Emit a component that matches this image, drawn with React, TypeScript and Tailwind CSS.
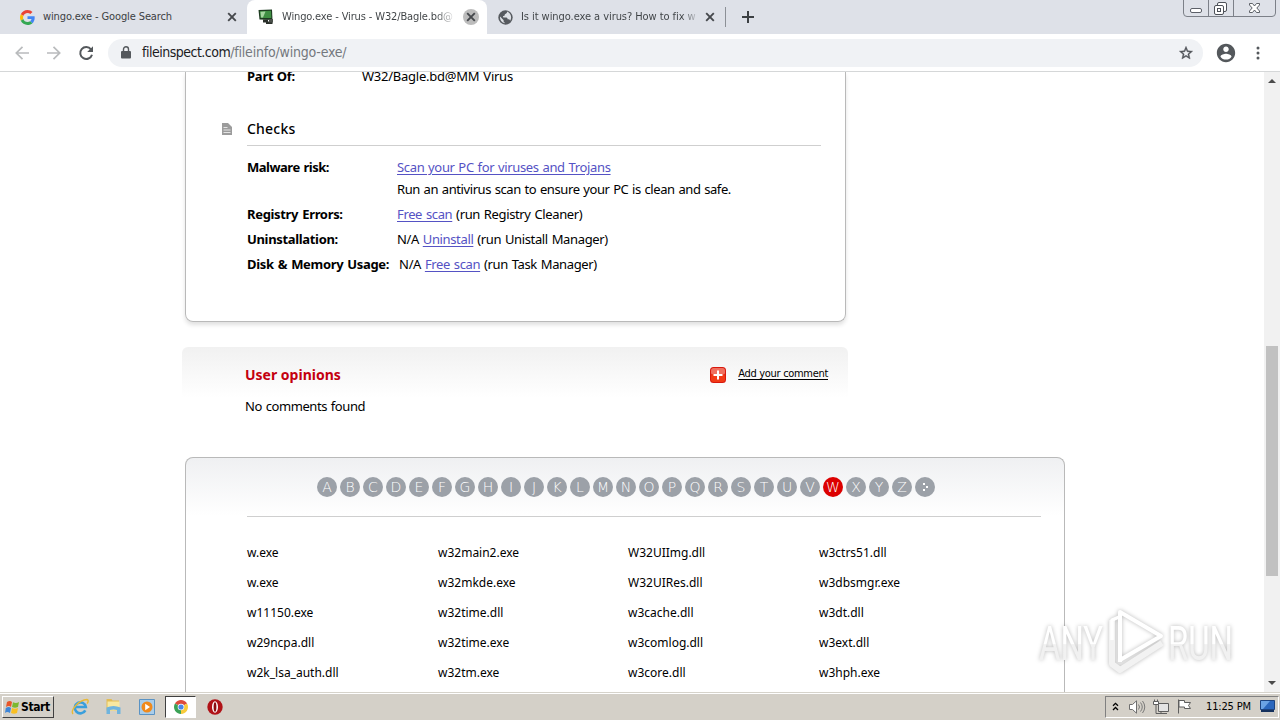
import type { ReactNode } from 'react';

const letters = [...'ABCDEFGHIJKLMNOPQRSTUVWXYZ'];

const files = [
  ['w.exe', 'w32main2.exe', 'W32UIImg.dll', 'w3ctrs51.dll'],
  ['w.exe', 'w32mkde.exe', 'W32UIRes.dll', 'w3dbsmgr.exe'],
  ['w11150.exe', 'w32time.dll', 'w3cache.dll', 'w3dt.dll'],
  ['w29ncpa.dll', 'w32time.exe', 'w3comlog.dll', 'w3ext.dll'],
  ['w2k_lsa_auth.dll', 'w32tm.exe', 'w3core.dll', 'w3hph.exe'],
];

function CloseIcon() {
  return (
    <svg width="10" height="10" viewBox="0 0 10 10" className="shrink-0">
      <path d="M1.2 1.2 8.8 8.8M8.8 1.2 1.2 8.8" stroke="#45484c" strokeWidth="1.9" />
    </svg>
  );
}

function GoogleIcon() {
  return (
    <svg width="15" height="15" viewBox="0 0 48 48" className="shrink-0">
      <path fill="#EA4335" d="M24 9.5c3.54 0 6.71 1.22 9.21 3.6l6.85-6.85C35.9 2.38 30.47 0 24 0 14.62 0 6.51 5.38 2.56 13.22l7.98 6.19C12.43 13.72 17.74 9.5 24 9.5z" />
      <path fill="#4285F4" d="M46.98 24.55c0-1.57-.15-3.09-.38-4.55H24v9.02h12.94c-.58 2.96-2.26 5.48-4.78 7.18l7.73 6c4.51-4.18 7.09-10.36 7.09-17.65z" />
      <path fill="#FBBC05" d="M10.53 28.59c-.48-1.45-.76-2.99-.76-4.59s.27-3.14.76-4.59l-7.98-6.19C.92 16.46 0 20.12 0 24c0 3.88.92 7.54 2.56 10.78l7.97-6.19z" />
      <path fill="#34A853" d="M24 48c6.48 0 11.93-2.13 15.89-5.81l-7.73-6c-2.15 1.45-4.92 2.3-8.16 2.3-6.26 0-11.57-4.22-13.47-9.91l-7.98 6.19C6.51 42.62 14.62 48 24 48z" />
    </svg>
  );
}

function MonitorIcon() {
  return (
    <svg width="16" height="16" viewBox="0 0 16 16" className="-ml-px shrink-0">
      <path d="M.5 1 14 .5 14.500 11 1.500 10.500z" fill="#1d3a20" />
      <path d="M1.800 2.200 13 1.800 13.400 9 2.500 9z" fill="#3f8f42" />
      <path d="M2.500 2.700 7.500 2.500 5 8.600 3 8.600z" fill="#a5d6a0" />
      <path d="M5 10.500h5v2h4.500V15H8v-1.500H5z" fill="#2b302b" />
      <path d="M11 10h4v3.500h-4z" fill="#4b504b" />
    </svg>
  );
}

function GlobeIcon() {
  return (
    <svg width="15" height="15" viewBox="0 0 24 24" className="-ml-px shrink-0">
      <circle cx="12" cy="12" r="11.500" fill="#565a5f" />
      <path d="M14.500 2.500c0 2-.5 3-2 3.300-1.500.2-1.700 1-1.700 2.500 0 1-1.600.8-2.400 1.300C7.600 10.100 8 12 9.500 12h3.800c1.600 0 2 1.200 2 2.700h1.500c1.500 0 2.200 1 2.500 2.300A9 9 0 0 0 21 12c0-4-2.600-8-6.500-9.500zM3.300 10.500 9 16.200v1.600c0 1.100.8 2 2 2V21.300A9.500 9.500 0 0 1 3.300 10.500z" fill="#dee1e6" />
    </svg>
  );
}

function TabStrip() {
  return (
    <div className="flex h-[34px] bg-[#dee1e8] text-[11px] text-[#3c4043] font-['DejaVu_Sans_Condensed',sans-serif]">
      <div className="flex w-[247px] items-center rounded-br-lg bg-[#dee1e8] pl-5">
        <GoogleIcon />
        <span className="ml-2 w-[184px] tracking-[-0.11px] whitespace-nowrap">wingo.exe - Google Search</span>
        <CloseIcon />
      </div>
      <div className="flex w-[240px] items-center rounded-t-lg bg-white pl-3">
        <MonitorIcon />
        <span className="ml-2 w-[175px] bg-linear-to-r from-[#3c4043] from-88% to-[#3c4043]/10 to-98% bg-clip-text tracking-[-0.13px] whitespace-nowrap text-transparent">
          Wingo.exe - Virus - W32/Bagle.bd@
        </span>
        <span className="ml-1.5 flex size-4 shrink-0 items-center justify-center rounded-full bg-[#bcbcbc]">
          <CloseIcon />
        </span>
      </div>
      <div className="flex w-[239px] items-center pl-3">
        <GlobeIcon />
        <span className="ml-2 w-[178px] bg-linear-to-r from-[#3c4043] from-91% to-[#3c4043]/10 bg-clip-text tracking-[-0.06px] whitespace-nowrap text-transparent">
          Is it wingo.exe a virus? How to fix w
        </span>
        <span className="ml-[7px] flex">
          <CloseIcon />
        </span>
        <div className="ml-2.5 h-5 w-px shrink-0 bg-[#8c9096]" />
      </div>
      <svg width="12" height="12" viewBox="0 0 12 12" className="mt-[11px] ml-4">
        <path d="M6 0v12M0 6h12" stroke="#3c4043" strokeWidth="2" />
      </svg>
      <WindowButtons />
    </div>
  );
}

function WindowButtons() {
  return (
    <svg width="93" height="17" viewBox="0 0 93 17" className="mr-1 ml-auto" fill="none" stroke="#7c8088">
      <path d="M.5 0V13Q.5 16.500 4 16.500H89Q92.500 16.500 92.500 13V0M25.500 0V16M50.500 0V16" />
      <rect x="7.500" y="8.500" width="11" height="4" rx="1.500" fill="#fff" stroke="#5c6068" />
      <g stroke="#4d5158" fill="#fff">
        <rect x="34.500" y="2.500" width="9" height="9" rx="1.500" />
        <rect x="31.500" y="5.500" width="9" height="9" rx="1.500" />
        <rect x="34.500" y="8.500" width="3" height="3" />
        <path d="M66.500 3.500h3l2 2.500 2-2.500h3v1.500L73.800 8l2.700 3v1.500h-3l-2-2.500-2 2.500h-3V11l2.700-3-2.700-3z" strokeWidth=".9" />
      </g>
    </svg>
  );
}

function Toolbar() {
  return (
    <div className="flex h-[38px] items-center border-b border-[#d5d7d8] bg-white pl-[15px]">
      <svg width="80" height="16" viewBox="0 0 80 16" fill="none" className="shrink-0">
        <path d="M14 8H1.500M7.500 1.800 1.300 8l6.200 6.200M32 8h12.500M38.500 1.800 44.700 8l-6.200 6.200" stroke="#b9bbbd" strokeWidth="1.700" />
        <path d="M76 4.300A6 6 0 1 0 77 9.700" stroke="#54585c" strokeWidth="2" />
        <path d="M78 1.200V7h-5.800z" fill="#54585c" />
      </svg>
      <div className="ml-[13px] flex h-7 w-[1095px] items-center rounded-full bg-[#f0f2f5] pr-[9px] pl-[13px] text-[14px] whitespace-nowrap font-['DejaVu_Sans_Condensed',sans-serif]">
        <svg width="10" height="13" viewBox="0 0 10 13" className="shrink-0">
          <path d="M2.500 6V3.300a2.500 2.500 0 0 1 5 0V6" fill="none" stroke="#54585c" strokeWidth="1.400" />
          <rect y="5" width="10" height="7.500" rx="1" fill="#54585c" />
        </svg>
        <span className="ml-[11px] tracking-[-0.5px] text-[#1b1c1e]">fileinspect.com</span>
        <span className="tracking-[-0.2px] text-[#74787d]">/fileinfo/wingo-exe/</span>
        <svg width="16" height="16" viewBox="0 0 24 24" className="ml-auto" fill="#4e5257">
          <path d="M22 9.240l-7.190-.62L12 2 9.190 8.630 2 9.240l5.460 4.730L5.820 21 12 17.270 18.180 21l-1.630-7.030L22 9.240zM12 15.400l-3.760 2.270 1-4.280-3.320-2.880 4.380-.38L12 6.100l1.710 4.040 4.380.38-3.320 2.880 1 4.280L12 15.400z" stroke="#4e5257" strokeWidth=".6" />
        </svg>
      </div>
      <svg width="22" height="22" viewBox="0 0 24 24" className="ml-3 shrink-0">
        <path fill="#54585c" d="M12 2C6.480 2 2 6.480 2 12s4.480 10 10 10 10-4.480 10-10S17.520 2 12 2zm0 3c1.660 0 3 1.340 3 3s-1.340 3-3 3-3-1.340-3-3 1.340-3 3-3zm0 14.200c-2.500 0-4.710-1.280-6-3.220.03-1.990 4-3.080 6-3.080 1.990 0 5.970 1.090 6 3.080-1.290 1.940-3.500 3.220-6 3.220z" />
      </svg>
      <svg width="4" height="14" viewBox="0 0 4 14" fill="#54585c" className="ml-[19px] shrink-0">
        <circle cx="2" cy="2" r="1.500" />
        <circle cx="2" cy="7" r="1.500" />
        <circle cx="2" cy="12" r="1.500" />
      </svg>
    </div>
  );
}

function A({ children }: { children: ReactNode }) {
  return <a href="#" className="text-[#5552c4] underline underline-offset-2">{children}</a>;
}

function CheckRow({ label, children }: { label: string; children: ReactNode }) {
  return (
    <div className="flex h-[25px] items-center whitespace-nowrap">
      <b className="min-w-[150px] pr-2.5 tracking-[-0.33px] [word-spacing:1px]">{label}</b>
      <span className="tracking-[-0.36px] [word-spacing:0.8px]">{children}</span>
    </div>
  );
}

function ChecksPanel() {
  return (
    <div className="h-[250px] w-[661px] rounded-b-lg border border-t-0 border-[#b9b9b9] pr-6 pl-[35px] shadow-[0_3px_4px_rgba(0,0,0,0.12)]">
      <div className="flex h-[9px] items-center pl-[26px] whitespace-nowrap">
        <b className="w-[115px] tracking-[-0.2px]">Part Of:</b>
        <span className="tracking-[-0.25px] [word-spacing:1px]">W32/Bagle.bd@MM Virus</span>
      </div>
      <div className="mt-[37px] flex">
        <svg width="11" height="12" viewBox="0 0 11 12" className="mt-[5px] mr-[15px] shrink-0">
          <path d="M1 0h6l4 4v8H1z" fill="#9c9c9c" />
          <path d="M2.500 4.500h4M2.500 7h7M2.500 9.500h7" stroke="#e4e4e4" />
        </svg>
        <h2 className="h-7 flex-1 border-b border-[#cfcfcf] text-[14px] leading-[22px] font-medium tracking-[0.2px]">Checks</h2>
      </div>
      <div className="mt-2.5 pl-[26px]">
        <div className="flex h-[46px] leading-[22px] whitespace-nowrap">
          <b className="w-[150px] tracking-[-0.5px] [word-spacing:1px]">Malware risk:</b>
          <div>
            <p className="tracking-[-0.34px] [word-spacing:0.7px]"><A>Scan your PC for viruses and Trojans</A></p>
            <p className="tracking-[-0.41px] [word-spacing:0.7px]">Run an antivirus scan to ensure your PC is clean and safe.</p>
          </div>
        </div>
        <div>
          <CheckRow label="Registry Errors:"><A>Free scan</A> (run Registry Cleaner)</CheckRow>
          <CheckRow label="Uninstallation:">N/A <A>Uninstall</A> (run Unistall Manager)</CheckRow>
          <CheckRow label="Disk & Memory Usage:">N/A <A>Free scan</A> (run Task Manager)</CheckRow>
        </div>
      </div>
    </div>
  );
}

function Opinions() {
  return (
    <div className="mt-[25px] -ml-[3px] h-[110px] w-[666px]">
      <div className="flex h-[51px] items-center rounded-t-md bg-linear-to-b from-[#f1f1f1] to-white pt-1 pr-5 pl-[63px]">
        <h2 className="text-[14px] leading-5 font-bold text-[#c4000f]">User opinions</h2>
        <svg width="16" height="16" viewBox="0 0 16 16" className="mt-px ml-auto">
          <rect width="16" height="16" rx="3.500" fill="#d8180c" />
          <rect x="1" y="1" width="14" height="7" rx="2.500" fill="#f0705f" />
          <rect x="1" y="7" width="14" height="8" rx="2.500" fill="#f23a16" />
          <path d="M8 3.500v9M3.500 8h9" stroke="#fff" strokeWidth="2" />
        </svg>
        <a href="#" className="ml-3 text-[11px] font-['DejaVu_Sans_Condensed',sans-serif] tracking-[-0.31px] text-black underline underline-offset-2">Add your comment</a>
      </div>
      <p className="pl-[63px] leading-4 tracking-[-0.42px] [word-spacing:0.8px]">No comments found</p>
    </div>
  );
}

function FileIndex() {
  return (
    <div className="w-[880px] grow rounded-t-lg border border-b-0 border-[#b9b9b9] bg-linear-to-b from-[#eff0f2] to-white to-[58px] pr-[23px] pl-[61px]">
      <div className="flex h-[59px] gap-[3px] border-b border-[#cfcfcf] pt-[19px] pl-[70px]">
        {letters.map(l => (
          <span
            key={l}
            className={`flex size-5 items-center justify-center rounded-full text-[14px] leading-5 font-extralight font-['DejaVu_Sans',sans-serif] text-white ${l === 'W' ? 'bg-[#dc0000]' : 'bg-[#9ca1a8]'}`}
          >
            {l}
          </span>
        ))}
        <span className="flex size-5 items-center justify-center rounded-full bg-[#9ca1a8]">
          <svg width="8" height="8" viewBox="0 0 8 8" fill="#fff">
            <path d="M2 0h2v2H2zM5 3h2v2H5zM2 6h2v2H2z" />
          </svg>
        </span>
      </div>
      <div className="mt-[21px] grid auto-rows-[30px] grid-cols-[191px_190px_191px_1fr] text-[12px] leading-[30px]">
        {files.flat().map((f, i) => <span key={i}>{f}</span>)}
      </div>
    </div>
  );
}

function Scrollbar() {
  return (
    <div className="flex w-4 shrink-0 flex-col items-center bg-[#f1f1f1] py-[7px]">
      <svg width="8" height="4" viewBox="0 0 8 4"><path d="M0 4 4 0l4 4z" fill="#4b4b4b" /></svg>
      <div className="mt-[263px] h-[230px] w-3 bg-[#c1c1c1]" />
      <svg width="8" height="4" viewBox="0 0 8 4" className="mt-auto"><path d="M0 0h8L4 4z" fill="#4b4b4b" /></svg>
    </div>
  );
}

function Watermark() {
  return (
    <svg
      width="210"
      height="80"
      viewBox="0 0 210 80"
      className="absolute top-[602px] left-[1030px] drop-shadow-[0_0_2px_rgba(0,0,0,0.28)]"
    >
      <defs>
        <linearGradient id="wm" x1="0" y1="0" x2="0" y2="1">
          <stop offset="0.500" stopColor="#fff" />
          <stop offset="0.520" stopColor="#f1f1f1" />
        </linearGradient>
      </defs>
      <g fill="url(#wm)" className="font-['Roboto',sans-serif] text-[49px]">
        <text x="9" y="58" textLength="64" lengthAdjust="spacingAndGlyphs">ANY</text>
        <text x="138" y="58" textLength="65" lengthAdjust="spacingAndGlyphs">RUN</text>
      </g>
      <g fill="none" strokeLinejoin="round">
        <path d="M82 18v44l8 6 42-27" stroke="#f2f2f2" strokeWidth="6" />
        <path d="M82 38V18l7-3" stroke="#fff" strokeWidth="3.500" />
        <path d="M90 60V10l41 24-41 24" stroke="#fff" strokeWidth="4" />
      </g>
    </svg>
  );
}

function Taskbar() {
  return (
    <div className="flex h-7 items-center border-t border-[#d6d3cb] bg-[#d4d0c8] pl-0.5 shadow-[inset_0_1px_0_#fff]">
      <div className="flex h-[22px] w-[52px] items-center border border-t-white border-r-[#404040] border-b-[#404040] border-l-white pl-0.5 text-[12px] font-bold text-black font-['DejaVu_Sans_Condensed',sans-serif] tracking-[-0.4px]">
        <svg width="15" height="14" viewBox="0 0 15 14" className="mr-px shrink-0">
          <path d="M2 2Q5 0 7 2L6 7Q4 5 1 7z" fill="#e8562a" />
          <path d="M8 2.300Q11 4 14 2L13 7Q10 8.500 7 7z" fill="#7cb82f" />
          <path d="M.8 8Q4 6 6 8L5 13Q2 11 0 13z" fill="#3e86d8" />
          <path d="M7 8Q10 9.500 13 8L12 13Q9 14.500 6 13z" fill="#f9bf21" />
        </svg>
        Start
      </div>
      <svg width="18" height="18" viewBox="0 0 18 18" className="ml-[17px]" fill="none">
        <path d="M14.300 12.300A5.500 5.500 0 1 1 14.800 9H4.500" stroke="#3a9fdc" strokeWidth="2.600" />
        <path d="M2 16C-1 12 8 2 16 1.500c2 .5 1 3 0 4" stroke="#e9b935" strokeWidth="1.400" />
      </svg>
      <svg width="17" height="17" viewBox="0 0 17 17" className="ml-4">
        <path d="M1.500 1h5l1 1.500h6.500v10h-12.500z" fill="#e3bd55" />
        <path d="M2.500 3.500h12v9h-12z" fill="#f8e8a0" />
        <path d="M1.500 9.500q7-3 14 0V16h-3.500v-4q-3.500-1-7 0v4H1.500z" fill="#6fb4de" />
      </svg>
      <svg width="16" height="16" viewBox="0 0 16 16" className="ml-[17px]">
        <path d="M.5.5h15v15H.5z" fill="#a9cdea" stroke="#5a93c4" />
        <circle cx="8" cy="8" r="5.500" fill="#f08a1c" />
        <path d="M6.200 4.800 11 8l-4.800 3.200z" fill="#fff" />
      </svg>
      <div className="ml-2.5 flex h-[22px] w-[31px] items-center justify-center border border-t-[#404040] border-r-white border-b-white border-l-[#404040] bg-white">
        <svg width="14" height="14" viewBox="0 0 14 14">
          <path d="M7 7 .94 3.500A7 7 0 0 1 13.060 3.500z" fill="#dd4b3c" />
          <path d="M7 7 13.060 3.500A7 7 0 0 1 7 14z" fill="#f8cb3b" />
          <path d="M7 7V14A7 7 0 0 1 .94 3.500z" fill="#3ba256" />
          <circle cx="7" cy="7" r="3.300" fill="#fff" />
          <circle cx="7" cy="7" r="2.600" fill="#4a86e8" />
        </svg>
      </div>
      <svg width="16" height="16" viewBox="0 0 16 16" className="ml-[11px]">
        <circle cx="8" cy="8" r="7.700" fill="#b01217" />
        <ellipse cx="8" cy="8" rx="3" ry="5.800" fill="#fff" />
        <ellipse cx="8" cy="8" rx="1.400" ry="4.800" fill="#8c0d10" />
      </svg>
      <div className="mr-px ml-auto flex h-[22px] w-[174px] items-center border border-t-[#808080] border-r-white border-b-white border-l-[#808080] pl-1.5">
        <svg width="7" height="9" viewBox="0 0 7 9" fill="none" stroke="#000" strokeWidth="1.300">
          <path d="m1 3.800 2.500-2.500L6 3.800M1 8l2.500-2.500L6 8" />
        </svg>
        <svg width="17" height="14" viewBox="0 0 17 14" className="ml-2.5" fill="none" stroke="#6e6e6e">
          <path d="M.5 4.500h3L7.500.8v12.400L3.500 9.500h-3z" fill="#fff" />
          <path d="M9.500 4.500q2 2.500 0 5M11.500 2.500q3.500 4.500 0 9M13.500 1q4.500 6 0 12" strokeWidth=".9" />
        </svg>
        <svg width="16" height="16" viewBox="0 0 16 16" className="ml-[7px]" fill="#fff" stroke="#5e5e5e">
          <path d="M5.500 4.500h10v8h-10zM8 12.500v2M6 14.500h8" fill="#e4e4e4" />
          <path d="M1.500.5v3M4.500.5v3M3 5.500v9h3" fill="none" />
          <path d="M.5 2.500h5v3h-5z" />
        </svg>
        <svg width="15" height="15" viewBox="0 0 15 15" className="ml-2" fill="#fff" stroke="#5e5e5e">
          <path d="M1.500.5v14" />
          <path d="M2 1.500h5.500v2h6l-2 3 2 3h-6v-1.500H2z" />
        </svg>
        <span className="ml-3.5 pt-px text-[11px] tracking-[-0.15px] whitespace-nowrap text-black font-['DejaVu_Sans_Condensed',sans-serif]">11:25 PM</span>
        <svg width="15" height="13" viewBox="0 0 15 13" className="ml-[9px]">
          <path d="M.5.5h14v9H.5z" fill="#2b67bd" stroke="#1d4480" />
          <path d="M1 1h9L3 9H1z" fill="#6ba3e4" />
          <path d="M1 10h13v2H1z" fill="#14305c" />
        </svg>
      </div>
    </div>
  );
}

export default function App() {
  return (
    <div className="relative flex h-[720px] w-[1280px] flex-col overflow-hidden bg-white text-[13px] text-black font-['Noto_Sans',sans-serif]">
      <TabStrip />
      <Toolbar />
      <div className="flex h-[620px] overflow-hidden">
        <main className="flex flex-1 flex-col pl-[185px]">
          <ChecksPanel />
          <Opinions />
          <FileIndex />
        </main>
        <Scrollbar />
      </div>
      <Taskbar />
      <Watermark />
    </div>
  );
}
